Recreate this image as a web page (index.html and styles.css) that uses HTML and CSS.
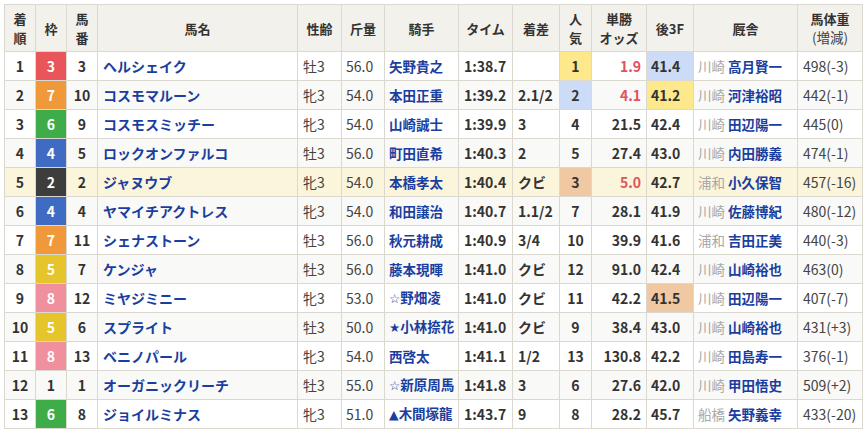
FILE: index.html
```html
<!DOCTYPE html>
<html lang="ja">
<head>
<meta charset="utf-8">
<title>レース結果</title>
<link rel="stylesheet" href="styles.css">
</head>
<body>
<table class="result">
  <colgroup>
    <col class="c-rank"><col class="c-waku"><col class="c-num"><col class="c-name">
    <col class="c-sex"><col class="c-kin"><col class="c-jockey"><col class="c-time">
    <col class="c-diff"><col class="c-pop"><col class="c-odds"><col class="c-f3">
    <col class="c-trainer"><col class="c-weight">
  </colgroup>
  <thead>
    <tr>
      <th>着<br>順</th><th>枠</th><th>馬<br>番</th><th>馬名</th>
      <th>性齢</th><th>斤量</th><th>騎手</th><th>タイム</th>
      <th>着差</th><th>人<br>気</th><th>単勝<br>オッズ</th><th>後3F</th>
      <th>厩舎</th><th>馬体重<br><span class="sub">(増減)</span></th>
    </tr>
  </thead>
  <tbody>
    <tr>
      <td class="ctr b">1</td><td class="waku w3">3</td><td class="ctr b">3</td><td class="name">ヘルシェイク</td>
      <td class="sex">牡3</td><td class="kin">56.0</td><td class="jockey">矢野貴之</td><td class="time">1:38.7</td>
      <td class="diff"></td><td class="pop p1">1</td><td class="odds hot">1.9</td><td class="f3 p2">41.4</td>
      <td class="trainer"><span class="aff">川崎</span> <span class="tname">高月賢一</span></td><td class="weight">498(-3)</td>
    </tr>
    <tr class="alt">
      <td class="ctr b">2</td><td class="waku w7">7</td><td class="ctr b">10</td><td class="name">コスモマルーン</td>
      <td class="sex">牝3</td><td class="kin">54.0</td><td class="jockey">本田正重</td><td class="time">1:39.2</td>
      <td class="diff">2.1/2</td><td class="pop p2">2</td><td class="odds hot">4.1</td><td class="f3 p1">41.2</td>
      <td class="trainer"><span class="aff">川崎</span> <span class="tname">河津裕昭</span></td><td class="weight">442(-1)</td>
    </tr>
    <tr>
      <td class="ctr b">3</td><td class="waku w6">6</td><td class="ctr b">9</td><td class="name">コスモスミッチー</td>
      <td class="sex">牝3</td><td class="kin">54.0</td><td class="jockey">山崎誠士</td><td class="time">1:39.9</td>
      <td class="diff">3</td><td class="pop">4</td><td class="odds">21.5</td><td class="f3">42.4</td>
      <td class="trainer"><span class="aff">川崎</span> <span class="tname">田辺陽一</span></td><td class="weight">445(0)</td>
    </tr>
    <tr class="alt">
      <td class="ctr b">4</td><td class="waku w4">4</td><td class="ctr b">5</td><td class="name">ロックオンファルコ</td>
      <td class="sex">牡3</td><td class="kin">56.0</td><td class="jockey">町田直希</td><td class="time">1:40.3</td>
      <td class="diff">2</td><td class="pop">5</td><td class="odds">27.4</td><td class="f3">43.0</td>
      <td class="trainer"><span class="aff">川崎</span> <span class="tname">内田勝義</span></td><td class="weight">474(-1)</td>
    </tr>
    <tr class="hl">
      <td class="ctr b">5</td><td class="waku w2">2</td><td class="ctr b">2</td><td class="name">ジャヌウブ</td>
      <td class="sex">牝3</td><td class="kin">54.0</td><td class="jockey">本橋孝太</td><td class="time">1:40.4</td>
      <td class="diff">クビ</td><td class="pop p3">3</td><td class="odds hot">5.0</td><td class="f3">42.7</td>
      <td class="trainer"><span class="aff">浦和</span> <span class="tname">小久保智</span></td><td class="weight">457(-16)</td>
    </tr>
    <tr class="alt">
      <td class="ctr b">6</td><td class="waku w4">4</td><td class="ctr b">4</td><td class="name">ヤマイチアクトレス</td>
      <td class="sex">牝3</td><td class="kin">54.0</td><td class="jockey">和田譲治</td><td class="time">1:40.7</td>
      <td class="diff">1.1/2</td><td class="pop">7</td><td class="odds">28.1</td><td class="f3">41.9</td>
      <td class="trainer"><span class="aff">川崎</span> <span class="tname">佐藤博紀</span></td><td class="weight">480(-12)</td>
    </tr>
    <tr>
      <td class="ctr b">7</td><td class="waku w7">7</td><td class="ctr b">11</td><td class="name">シェナストーン</td>
      <td class="sex">牡3</td><td class="kin">56.0</td><td class="jockey">秋元耕成</td><td class="time">1:40.9</td>
      <td class="diff">3/4</td><td class="pop">10</td><td class="odds">39.9</td><td class="f3">41.6</td>
      <td class="trainer"><span class="aff">浦和</span> <span class="tname">吉田正美</span></td><td class="weight">440(-3)</td>
    </tr>
    <tr class="alt">
      <td class="ctr b">8</td><td class="waku w5">5</td><td class="ctr b">7</td><td class="name">ケンジャ</td>
      <td class="sex">牡3</td><td class="kin">56.0</td><td class="jockey">藤本現暉</td><td class="time">1:41.0</td>
      <td class="diff">クビ</td><td class="pop">12</td><td class="odds">91.0</td><td class="f3">42.4</td>
      <td class="trainer"><span class="aff">川崎</span> <span class="tname">山崎裕也</span></td><td class="weight">463(0)</td>
    </tr>
    <tr>
      <td class="ctr b">9</td><td class="waku w8">8</td><td class="ctr b">12</td><td class="name">ミヤジミニー</td>
      <td class="sex">牝3</td><td class="kin">53.0</td><td class="jockey"><span class="mark">☆</span>野畑凌</td><td class="time">1:41.0</td>
      <td class="diff">クビ</td><td class="pop">11</td><td class="odds">42.2</td><td class="f3 p3">41.5</td>
      <td class="trainer"><span class="aff">川崎</span> <span class="tname">田辺陽一</span></td><td class="weight">407(-7)</td>
    </tr>
    <tr class="alt">
      <td class="ctr b">10</td><td class="waku w5">5</td><td class="ctr b">6</td><td class="name">スプライト</td>
      <td class="sex">牡3</td><td class="kin">50.0</td><td class="jockey"><span class="mark">★</span>小林捺花</td><td class="time">1:41.0</td>
      <td class="diff">クビ</td><td class="pop">9</td><td class="odds">38.4</td><td class="f3">43.0</td>
      <td class="trainer"><span class="aff">川崎</span> <span class="tname">山崎裕也</span></td><td class="weight">431(+3)</td>
    </tr>
    <tr>
      <td class="ctr b">11</td><td class="waku w8">8</td><td class="ctr b">13</td><td class="name">ベニノパール</td>
      <td class="sex">牝3</td><td class="kin">54.0</td><td class="jockey">西啓太</td><td class="time">1:41.1</td>
      <td class="diff">1/2</td><td class="pop">13</td><td class="odds">130.8</td><td class="f3">42.2</td>
      <td class="trainer"><span class="aff">川崎</span> <span class="tname">田島寿一</span></td><td class="weight">376(-1)</td>
    </tr>
    <tr class="alt">
      <td class="ctr b">12</td><td class="waku w1">1</td><td class="ctr b">1</td><td class="name">オーガニックリーチ</td>
      <td class="sex">牡3</td><td class="kin">55.0</td><td class="jockey"><span class="mark">☆</span>新原周馬</td><td class="time">1:41.8</td>
      <td class="diff">3</td><td class="pop">6</td><td class="odds">27.6</td><td class="f3">42.0</td>
      <td class="trainer"><span class="aff">川崎</span> <span class="tname">甲田悟史</span></td><td class="weight">509(+2)</td>
    </tr>
    <tr>
      <td class="ctr b">13</td><td class="waku w6">6</td><td class="ctr b">8</td><td class="name">ジョイルミナス</td>
      <td class="sex">牝3</td><td class="kin">51.0</td><td class="jockey"><span class="mark">▲</span>木間塚龍</td><td class="time">1:43.7</td>
      <td class="diff">9</td><td class="pop">8</td><td class="odds">28.2</td><td class="f3">45.7</td>
      <td class="trainer"><span class="aff">船橋</span> <span class="tname">矢野義幸</span></td><td class="weight">433(-20)</td>
    </tr>
  </tbody>
</table>
</body>
</html>
```
FILE: styles.css
```css
html, body {
  margin: 0;
  padding: 0;
  background: #fff;
}
body {
  padding: 4px;
  font-family: "Noto Sans CJK JP", "Noto Sans", sans-serif;
  font-size: 14px;
  color: #333;
}
.result {
  border-collapse: collapse;
  table-layout: fixed;
  width: 859px;
}
.c-rank { width: 31px; }
.c-waku { width: 31px; }
.c-num { width: 31px; }
.c-name { width: 200px; }
.c-sex { width: 44px; }
.c-kin { width: 43px; }
.c-jockey { width: 74px; }
.c-time { width: 54px; }
.c-diff { width: 47px; }
.c-pop { width: 32px; }
.c-odds { width: 55px; }
.c-f3 { width: 47px; }
.c-trainer { width: 104px; }
.c-weight { width: 65px; }

.result th, .result td {
  border: 1px solid #dbd8d0;
  padding: 0 4px;
  white-space: nowrap;
  overflow: hidden;
}
.result th {
  background: #f3f1ec;
  height: 46px;
  font-size: 13px;
  line-height: 19px;
  font-weight: bold;
  color: #333;
  text-align: center;
  padding: 0 2px;
}
.result th .sub {
  font-weight: normal;
  font-size: 13.5px;
  color: #444;
}
.result td {
  height: 28px;
  line-height: 18px;
  text-align: left;
}
.result tbody tr { background: #fff; }
.result tbody tr.alt { background: #f9f9f8; }
.result tbody tr.hl { background: #fbf5dc; }

.ctr { text-align: center !important; }
.b { font-weight: bold; color: #333; }

.waku {
  text-align: center !important;
  font-weight: bold;
  color: #fff;
}
.w1 { color: #333; }
.w2 { background: #3d3d3d; }
.w3 { background: #e8555a; }
.w4 { background: #3f6cc2; }
.w5 { background: #e5c42c; }
.w6 { background: #3fac4a; }
.w7 { background: #f0993a; }
.w8 { background: #f0909f; }

.name {
  color: #1a3ea0;
  font-weight: bold;
  padding-left: 5px !important;
}
.sex { color: #444; padding-left: 5px !important; }
.kin { color: #444; }
.jockey { color: #1a3ea0; font-weight: bold; font-size: 13.5px; }
.jockey .mark {
  font-family: "DejaVu Sans", sans-serif;
  font-size: 12.5px;
  font-weight: normal;
}
.time { font-weight: bold; color: #333; padding-left: 5px !important; }
.diff { font-weight: bold; color: #333; padding-left: 5px !important; }
.pop { text-align: center !important; font-weight: bold; color: #333; }
.p1 { background: #fde98c; }
.p2 { background: #cddcf6; }
.p3 { background: #f0c9a2; }
.odds { text-align: right !important; font-weight: bold; color: #333; padding-right: 5px !important; }
.odds.hot { color: #e0525f; }
.f3 { font-weight: bold; color: #333; }
.trainer { font-size: 13.5px; }
.trainer .aff { color: #a8a8a8; }
.trainer .tname { color: #1a3ea0; font-weight: bold; }
.weight { color: #444; padding-left: 5px !important; }
```
